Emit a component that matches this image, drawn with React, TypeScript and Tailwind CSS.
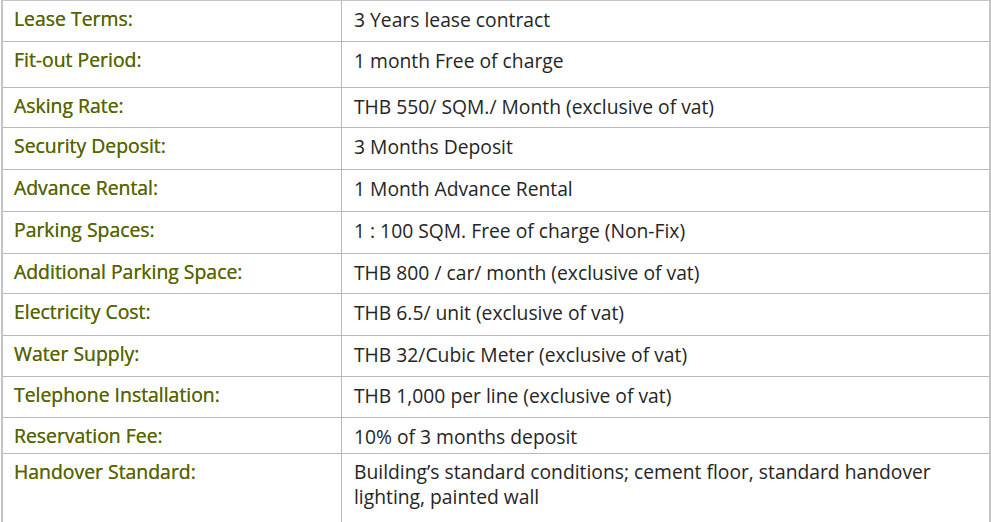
const rows: { label: string; value: string; h: string }[] = [
  { label: 'Lease Terms:', value: '3 Years lease contract', h: 'h-[40px]' },
  { label: 'Fit-out Period:', value: '1 month Free of charge', h: 'h-[46px]' },
  { label: 'Asking Rate:', value: 'THB 550/ SQM./ Month (exclusive of vat)', h: 'h-[40px]' },
  { label: 'Security Deposit:', value: '3 Months Deposit', h: 'h-[42px]' },
  { label: 'Advance Rental:', value: '1 Month Advance Rental', h: 'h-[42px]' },
  { label: 'Parking Spaces:', value: '1 : 100 SQM. Free of charge (Non-Fix)', h: 'h-[42px]' },
  { label: 'Additional Parking Space:', value: 'THB 800 / car/ month (exclusive of vat)', h: 'h-[40px]' },
  { label: 'Electricity Cost:', value: 'THB 6.5/ unit (exclusive of vat)', h: 'h-[42px]' },
  { label: 'Water Supply:', value: 'THB 32/Cubic Meter (exclusive of vat)', h: 'h-[41px]' },
  { label: 'Telephone Installation:', value: 'THB 1,000 per line (exclusive of vat)', h: 'h-[41px]' },
  { label: 'Reservation Fee:', value: '10% of 3 months deposit', h: 'h-[36px]' },
]

const labelCls =
  'w-[339px] shrink-0 border-r border-[#b9b9b9] pl-[11px] text-[19.4px] leading-[24px] text-[#566500] [text-shadow:0_0_0.4px_#566500]'
const valueCls = 'flex-1 pl-[12px] text-[19.3px] leading-[25px] text-[#252525]'

export default function App() {
  return (
    <div className="h-[522px] w-[991px] overflow-hidden bg-white pl-[1px] font-['Open_Sans','Liberation_Sans',sans-serif]">
      <div className="w-[990px] border-x-2 border-t border-[#c4c4c4]">
        {rows.map((r, i) => (
          <div
            key={r.label}
            className={`flex ${r.h} ${i > 0 ? 'border-t border-[#b9b9b9]' : ''}`}
          >
            <div className={`${labelCls} pt-[6px]`}>{r.label}</div>
            <div className={`${valueCls} pt-[6px]`}>{r.value}</div>
          </div>
        ))}
        <div className="flex h-[80px] border-t border-[#b9b9b9]">
          <div className={`${labelCls} pt-[6px]`}>Handover Standard:</div>
          <div className={`${valueCls} pt-[5px]`}>
            Building’s standard conditions; cement floor, standard handover
            <br />
            lighting, painted wall
          </div>
        </div>
      </div>
    </div>
  )
}
